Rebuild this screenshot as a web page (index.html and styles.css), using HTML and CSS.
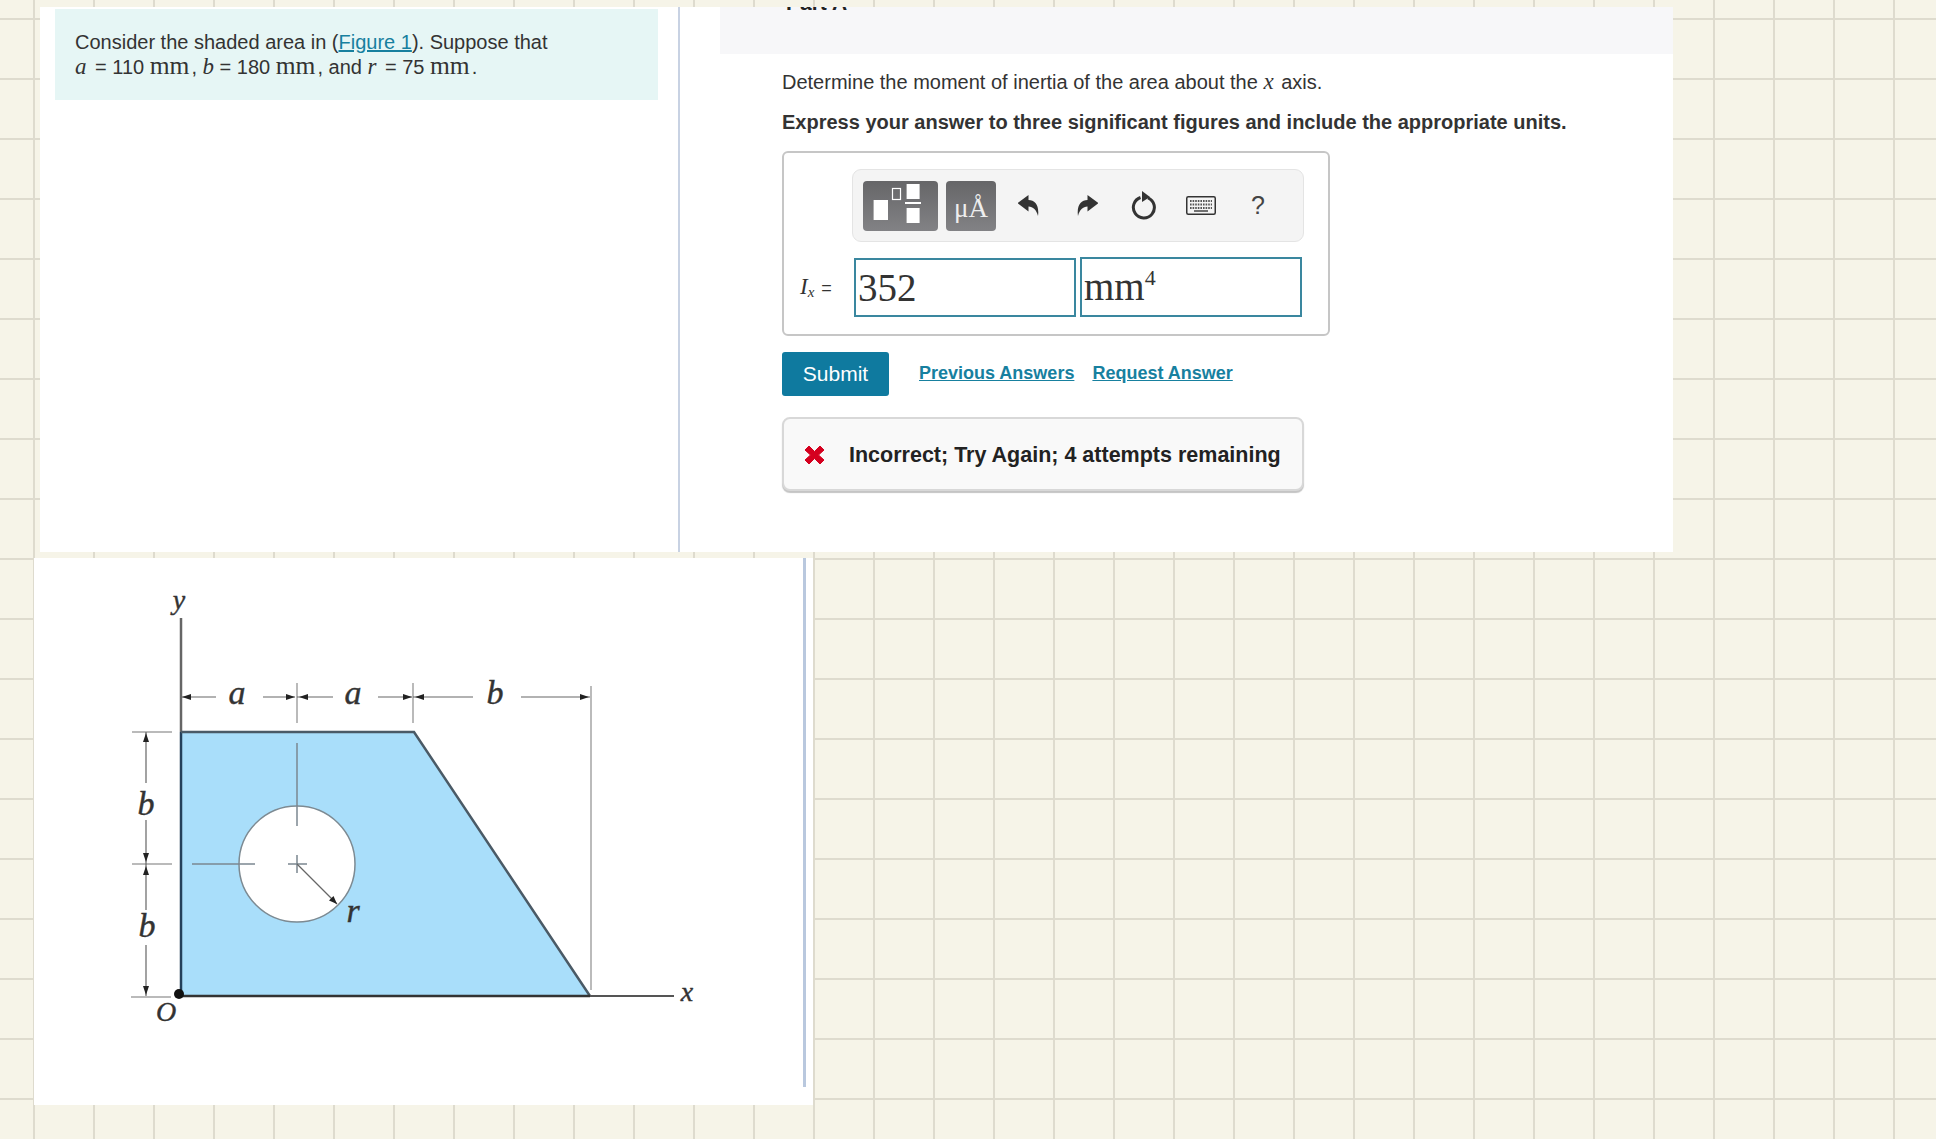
FILE: index.html
```html
<!DOCTYPE html>
<html lang="en">
<head>
<meta charset="utf-8">
<title>Moment of inertia</title>
<link rel="stylesheet" href="styles.css">
</head>
<body>
<main class="panel">
  <section class="left">
    <div class="intro">
      <p>Consider the shaded area in (<a href="#">Figure 1</a>). Suppose that</p>
      <p class="given"><i class="mi gap">a</i> = 110 <span class="mu">mm</span>, <i class="mi">b</i> = 180 <span class="mu">mm</span>, and <i class="mi gap">r</i> = 75 <span class="mu">mm</span>.</p>
    </div>
  </section>
  <section class="right">
    <header class="part"><h2>Part A</h2></header>
    <div class="content">
      <p class="q">Determine the moment of inertia of the area about the <i class="mi vx">x</i> axis.</p>
      <p class="q strong">Express your answer to three significant figures and include the appropriate units.</p>
      <div class="answer">
        <div class="toolbar">
          <div class="tbtn wide">
            <svg width="75" height="50" viewBox="0 0 75 50" aria-hidden="true">
              <rect x="10.6" y="19" width="14.4" height="20" fill="#fff"/>
              <rect x="29.5" y="7.5" width="8" height="11" fill="none" stroke="#fff" stroke-width="1.2"/>
              <rect x="43.6" y="3" width="13" height="15" fill="#fff"/>
              <rect x="42" y="21" width="16" height="2" fill="#fff"/>
              <rect x="43.6" y="27" width="13" height="15" fill="#fff"/>
            </svg>
          </div>
          <div class="tbtn units">μÅ</div>
          <div class="slot">
            <svg width="22" height="24" viewBox="1 0 22 24" aria-hidden="true"><path d="M0.5 9 L11.5 1 V6 C18 6 22.5 11.500 21 22 C19.500 16 16 12.500 11.500 12.500 V17.500 Z" fill="#333"/></svg>
          </div>
          <div class="slot shifted">
            <svg width="22" height="24" viewBox="-1 0 22 24" aria-hidden="true"><path d="M21.500 9 L10.500 1 V6 C4 6 -0.500 11.500 1 22 C2.500 16 6 12.500 10.500 12.500 V17.500 Z" fill="#333"/></svg>
          </div>
          <div class="slot">
            <svg width="26" height="30" viewBox="0 0 26 30" aria-hidden="true"><path d="M9.500 6.500 A10.500 10.500 0 1 0 17 6.800" fill="none" stroke="#333" stroke-width="3"/><path d="M11 0 L19 6 L11 11 Z" fill="#333"/></svg>
          </div>
          <div class="slot">
            <svg width="30" height="19" viewBox="0 0 30 19" aria-hidden="true">
              <rect x="0.750" y="0.750" width="28.500" height="17.500" rx="1.500" fill="#f4f4f4" stroke="#333" stroke-width="1.500"/>
              <path d="M4 5H26M4 8.500H26M4 12H26" stroke="#555" stroke-width="1.800" stroke-dasharray="1.600 1"/>
              <path d="M8 15H22" stroke="#444" stroke-width="1.500"/>
            </svg>
          </div>
          <div class="slot help">?</div>
        </div>
        <div class="entry">
          <div class="eq"><i class="ivar">I<sub>x</sub></i><span class="equals">=</span></div>
          <div class="field first">352</div>
          <div class="field unit">mm<sup>4</sup></div>
        </div>
      </div>
      <div class="actions">
        <button class="submit" type="button">Submit</button>
        <a class="link" href="#">Previous Answers</a>
        <a class="link" href="#">Request Answer</a>
      </div>
      <div class="feedback">
        <svg class="cross" width="21" height="20" viewBox="0 0 21 20" aria-hidden="true"><path d="M1 5 L5 1 L10.500 6.500 L16 1 L20 5 L14.500 10 L20 15 L16 19 L10.500 13.500 L5 19 L1 15 L6.500 10 Z" fill="#d5001f" stroke="#d5001f" stroke-linejoin="round"/></svg>
        <span>Incorrect; Try Again; 4 attempts remaining</span>
      </div>
    </div>
  </section>
</main>
<figure class="figure">
  <div class="figure-inner">
    <svg class="diagram" width="769" height="529" viewBox="34 558 769 529" role="img" aria-label="Shaded trapezoidal area with circular hole">
      <polygon points="181,732 414,732 590,996 181,996" fill="#a9defa"/>
      <circle cx="297" cy="864" r="58" fill="#fff" stroke="#7d8a92" stroke-width="1.500"/>
      <path d="M181 618V732" fill="none" stroke="#666" stroke-width="2.500"/>
      <path d="M181 732V996" fill="none" stroke="#24405a" stroke-width="2.500"/>
      <path d="M181 732H414L590 996" fill="none" stroke="#4a5a66" stroke-width="2.500"/>
      <path d="M181 996H590" fill="none" stroke="#333" stroke-width="2.500"/>
      <path d="M590 996H674" stroke="#555" stroke-width="2"/>
      <circle cx="179" cy="994" r="5" fill="#111"/>
      <g fill="none" stroke="#a4a4a4" stroke-width="1.500">
        <path d="M591 686V990"/>
        <path d="M297 683V723M413 683V723"/>
        <path d="M132 732H172M132 864H172M131 997H171"/>
      </g>
      <g fill="none" stroke="#7b8790" stroke-width="1.500">
        <path d="M297 743V826"/>
        <path d="M192 864H255"/>
        <path d="M288 864H307M297 855V873"/>
      </g>
      <g fill="none" stroke="#666" stroke-width="1.200">
        <path d="M181 697H216M263 697H295M297 697H333M378 697H412M413 697H473M521 697H590"/>
        <path d="M146 732V783M146 820V864M146 864V910M146 945V996"/>
        <path d="M297 864L337 904"/>
      </g>
      <g fill="#222">
        <path d="M182 697l9-3v6zM295 697l-9-3v6zM299 697l9-3v6zM412 697l-9-3v6zM415 697l9-3v6zM589 697l-9-3v6z"/>
        <path d="M146 733l-3 9h6zM146 862l-3-9h6zM146 866l-3 9h6zM146 995l-3-9h6z"/>
        <path d="M337 904l-8-3.500 4.500-4.500z"/>
      </g>
      <g class="label">
        <text x="237" y="704">a</text>
        <text x="353" y="704">a</text>
        <text x="495" y="704">b</text>
        <text x="146" y="815">b</text>
        <text x="147" y="937">b</text>
        <text x="353" y="922">r</text>
        <text class="small" x="179" y="609">y</text>
        <text class="small" x="687" y="1001">x</text>
        <text class="small" x="166" y="1021">O</text>
      </g>
    </svg>
  </div>
</figure>
</body>
</html>
```

FILE: styles.css
```css
* { box-sizing: border-box; }

html, body { margin: 0; padding: 0; }

body {
  min-height: 100vh;
  padding-top: 7px;
  background-color: #f6f4e8;
  background-image:
    linear-gradient(#dedbce 2px, transparent 2px),
    linear-gradient(90deg, #dedbce 2px, transparent 2px);
  background-size: 60px 60px;
  background-position: 33px 18px;
  font-family: "Liberation Sans", Arial, sans-serif;
  color: #333;
}

p { margin: 0; }

.panel {
  display: flex;
  width: 1633px;
  height: 545px;
  margin-left: 40px;
  background: #fff;
}

.left {
  width: 640px;
  padding: 2px 20px 0 15px;
  border-right: 2px solid #c8d2e3;
}

.intro {
  height: 91px;
  padding: 21px 0 0 20px;
  background: #e6f6f5;
  font-size: 20px;
  line-height: 24px;
  white-space: nowrap;
}

.intro a { color: #17809f; }

.given { padding-top: 1px; }

.mi {
  font-family: "Liberation Serif", serif;
  font-size: 23px;
}

.gap { margin-right: 3px; }

.vx { margin-right: 2px; }

.mu {
  margin-right: 2px;
  font-family: "Liberation Serif", serif;
  font-size: 25.5px;
  line-height: 20px;
}

.right {
  flex: 1;
  min-width: 0;
}

.part {
  height: 47px;
  margin-left: 40px;
  padding-left: 66px;
  background: #f7f7f9;
  overflow: hidden;
}

.part h2 {
  margin: -16px 0 0;
  font-size: 21px;
  line-height: 24px;
  color: #222;
}

.content { padding: 16px 0 0 102px; }

.q {
  margin-bottom: 16px;
  font-size: 20px;
  line-height: 24px;
  white-space: nowrap;
}

.strong {
  margin-bottom: 17px;
  font-weight: 700;
}

.answer {
  width: 548px;
  height: 185px;
  padding: 16px 0 0 68px;
  border: 2px solid #c6c6c6;
  border-radius: 6px;
}

.toolbar {
  display: flex;
  align-items: center;
  width: 452px;
  height: 73px;
  padding-left: 10px;
  background: #f4f4f4;
  border: 1px solid #e4e4e4;
  border-radius: 9px;
}

.tbtn {
  display: flex;
  align-items: center;
  justify-content: center;
  height: 50px;
  border-radius: 4px;
  background: linear-gradient(#666668, #828285);
  color: #fff;
}

.wide { width: 75px; margin-right: 8px; }

.units {
  width: 50px;
  margin-right: 4px;
  padding-top: 6px;
  font-family: "Liberation Serif", serif;
  font-size: 27px;
  color: #eee;
}

.slot {
  display: flex;
  align-items: center;
  justify-content: center;
  width: 57px;
}

.shifted { margin-left: 1px; }

.help {
  padding-left: 1px;
  font-size: 25px;
  color: #444;
}

.entry {
  display: flex;
  align-items: flex-end;
  gap: 4px;
  margin-top: 15px;
}

.eq {
  align-self: center;
  width: 66px;
  margin-left: -68px;
  padding-left: 16px;
  font-size: 18px;
  white-space: nowrap;
  color: #333;
}

.ivar {
  font-family: "Liberation Serif", serif;
  font-size: 23px;
}

.ivar sub {
  font-size: 15px;
  line-height: 0;
  vertical-align: -3px;
}

.equals { margin-left: 7px; }

.field {
  width: 222px;
  height: 60px;
  padding-left: 2px;
  border: 2px solid #3a879f;
  font-family: "Liberation Serif", serif;
  font-size: 39px;
  line-height: 55px;
  color: #333;
}

.first { height: 59px; }

.field sup {
  font-size: 22px;
  line-height: 0;
  vertical-align: 15px;
}

.actions {
  display: flex;
  align-items: center;
  margin-top: 16px;
}

.submit {
  width: 107px;
  height: 44px;
  margin-right: 30px;
  padding: 0;
  border: 0;
  border-radius: 3px;
  background: #0f7a9f;
  color: #fff;
  font-family: inherit;
  font-size: 21px;
}

.link {
  margin-right: 18px;
  margin-bottom: 2px;
  font-size: 18px;
  font-weight: 700;
  color: #17809f;
}

.feedback {
  display: flex;
  align-items: center;
  gap: 24px;
  width: 522px;
  height: 74px;
  margin-top: 21px;
  padding: 3px 0 0 20px;
  background: #f9f9f9;
  border: 2px solid #d8d8d8;
  border-radius: 8px;
  box-shadow: 0 2px 1px #c4c4c4;
  font-size: 21.5px;
  font-weight: 700;
  color: #222;
  white-space: nowrap;
}

.cross { flex: none; margin-top: -2px; }

.figure {
  width: 779px;
  height: 547px;
  margin: 6px 0 0 34px;
  padding-right: 7px;
  background: #fff;
}

.figure-inner {
  height: 529px;
  border-right: 3px solid #b9c8de;
}

.diagram { display: block; }

.label text {
  font-family: "Liberation Serif", serif;
  font-style: italic;
  font-size: 34px;
  text-anchor: middle;
  fill: #333;
  stroke: #333;
  stroke-width: 0.4px;
}

.label .small { font-size: 28px; }
```
